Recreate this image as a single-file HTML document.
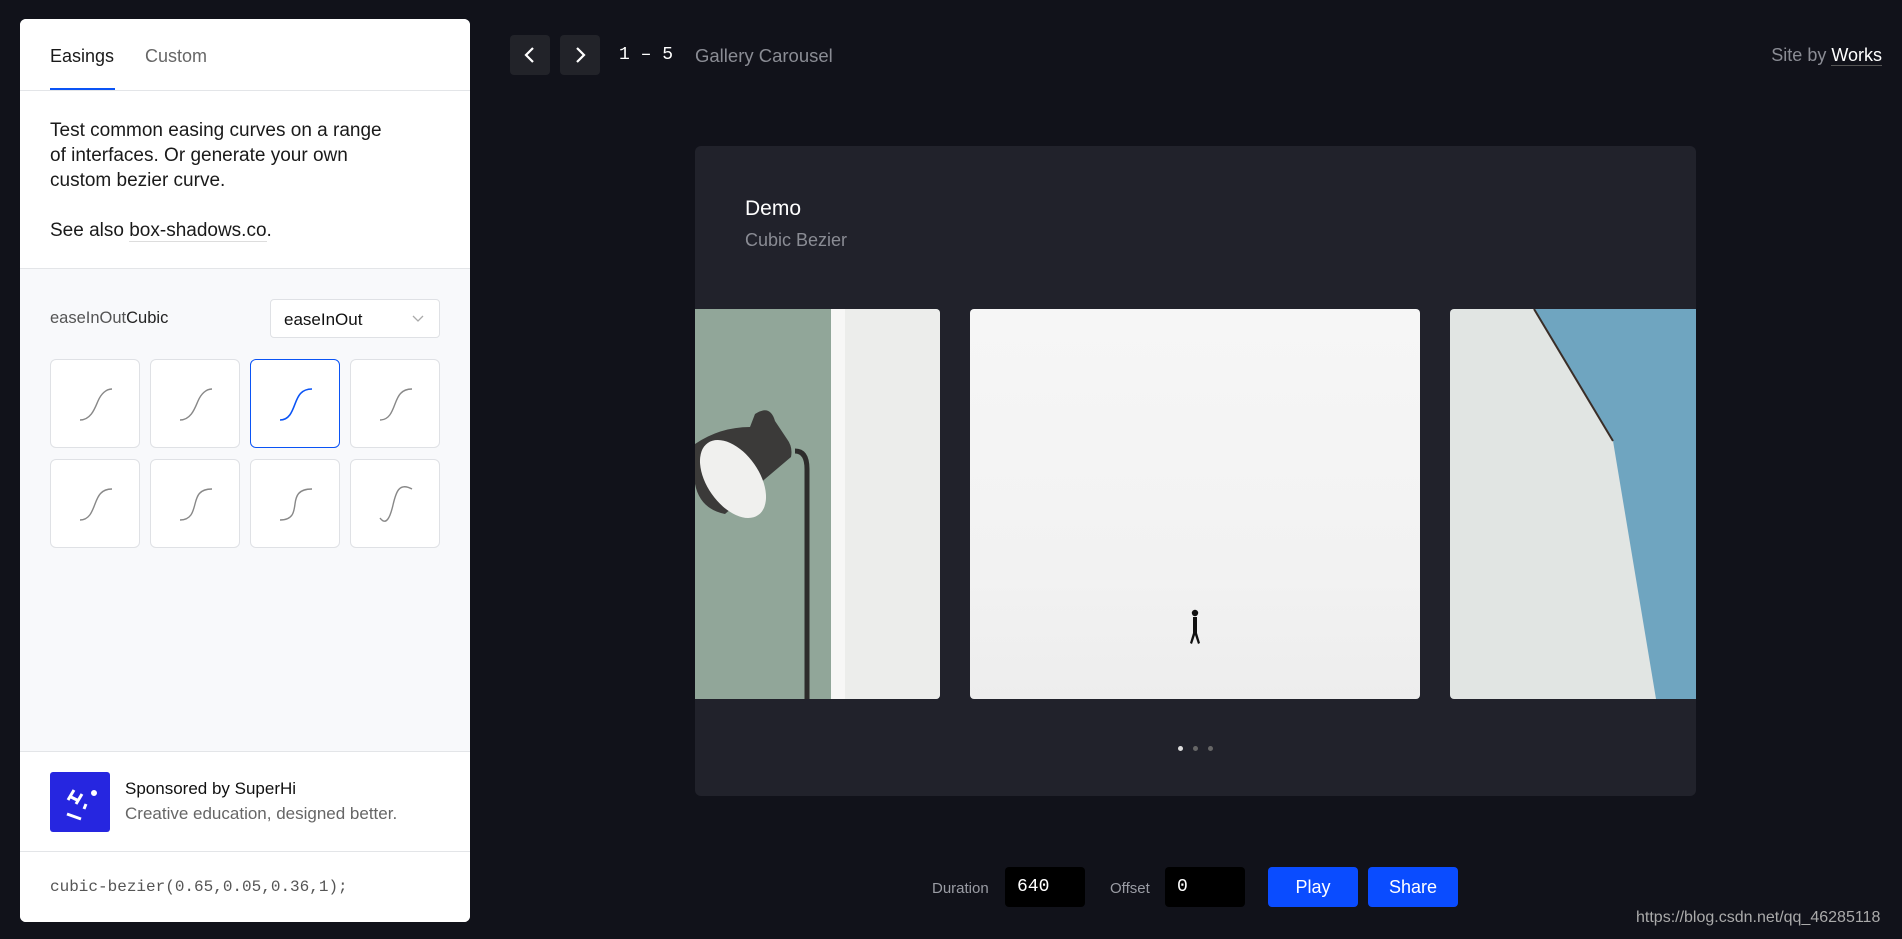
<!DOCTYPE html>
<html><head><meta charset="utf-8"><style>
*{box-sizing:border-box;margin:0;padding:0}
body{width:1902px;height:939px;background:#11121a;font-family:"Liberation Sans",sans-serif;position:relative;overflow:hidden}
.abs{position:absolute}
.panel{left:20px;top:19px;width:450px;height:903px;background:#f8f9fb;border-radius:6px;overflow:hidden}
.white{background:#fff}
.card{position:absolute;width:90px;height:89px;background:#fff;border:1px solid #dfe1e5;border-radius:6px}
.card svg{position:absolute;left:0;top:0}
.btn{background:#222329;border-radius:4px;width:40px;height:40px}
</style></head><body>
<div class="abs panel">
  <div class="abs white" style="left:0;top:0;width:450px;height:249px"></div>
  <div class="abs" style="left:30px;top:27px;font-size:18px;color:#1a1a1a">Easings</div>
  <div class="abs" style="left:125px;top:27px;font-size:18px;color:#666">Custom</div>
  <div class="abs" style="left:30px;top:69px;width:65px;height:2px;background:#0a53f5"></div>
  <div class="abs" style="left:0;top:71px;width:450px;height:1px;background:#e3e5e8"></div>
  <div class="abs" style="left:30px;top:99px;font-size:19px;line-height:25px;color:#1a1a1a;width:420px">Test common easing curves on a range<br>of interfaces. Or generate your own<br>custom bezier curve.<br><br>See also <span style="border-bottom:1px solid #ddd">box-shadows.co</span>.</div>
  <div class="abs" style="left:0;top:249px;width:450px;height:1px;background:#e3e5e8"></div>
  <div class="abs" style="left:30px;top:290px;font-size:16.5px;color:#555">easeInOut<span style="color:#222">Cubic</span></div>
  <div class="abs white" style="left:250px;top:280px;width:170px;height:39px;border:1px solid #dfe1e5;border-radius:4px"><span class="abs" style="left:13px;top:10px;font-size:17px;color:#111">easeInOut</span><svg class="abs" style="left:140px;top:14px" width="14" height="10"><path d="M2 2l5 5 5-5" stroke="#aaa" stroke-width="1.3" fill="none"/></svg></div>
  <div class="card" style="left:30px;top:340px"><svg width="90" height="89"><path d="M29 60 C40 60 44 48 47 41 S55 29 61 29" stroke="#888" stroke-width="1.4" fill="none"/></svg></div>
  <div class="card" style="left:130px;top:340px"><svg width="90" height="89"><path d="M29 60 C40 60 44 48 47 41 S55 29 61 29" stroke="#888" stroke-width="1.4" fill="none"/></svg></div>
  <div class="card" style="left:230px;top:340px;border-color:#0a53f5"><svg width="90" height="89"><path d="M29 60 C38 60 41 52 44 44 S50 29 61 29" stroke="#0a53f5" stroke-width="1.6" fill="none"/></svg></div>
  <div class="card" style="left:330px;top:340px"><svg width="90" height="89"><path d="M29 60 C38 60 41 52 44 44 S50 29 61 29" stroke="#888" stroke-width="1.4" fill="none"/></svg></div>
  <div class="card" style="left:30px;top:440px"><svg width="90" height="89"><path d="M29 60 C38 60 41 52 44 44 S50 29 61 29" stroke="#888" stroke-width="1.4" fill="none"/></svg></div>
  <div class="card" style="left:130px;top:440px"><svg width="90" height="89"><path d="M29 60 C40 60 42 52 44 44 S48 29 61 29" stroke="#888" stroke-width="1.4" fill="none"/></svg></div>
  <div class="card" style="left:230px;top:440px"><svg width="90" height="89"><path d="M29 60 C42 60 43 52 44 44 S47 29 61 29" stroke="#888" stroke-width="1.4" fill="none"/></svg></div>
  <div class="card" style="left:330px;top:440px"><svg width="90" height="89"><path d="M29 58 C35 66 39 58 42 45 S48 22 61 29" stroke="#888" stroke-width="1.4" fill="none"/></svg></div>
  <div class="abs white" style="left:0;top:732px;width:450px;height:171px;border-top:1px solid #e3e5e8"></div>
  <div class="abs" style="left:0;top:832px;width:450px;height:1px;background:#e3e5e8"></div>
  <div class="abs" style="left:30px;top:753px;width:60px;height:60px;background:#2626e0;border-radius:3px"><svg width="60" height="60"><g stroke="#fff" stroke-width="3" fill="none"><path d="M18 28l6-10M26 32l6-10M21 25l8 4M36 32l-2 5M17 42l14 5"/><circle cx="44" cy="21" r="1.5" fill="#fff"/></g></svg></div>
  <div class="abs" style="left:105px;top:760px;font-size:17px;color:#111">Sponsored by SuperHi</div>
  <div class="abs" style="left:105px;top:785px;font-size:17px;color:#666">Creative education, designed better.</div>
  <div class="abs" style="left:30px;top:859px;font-family:'Liberation Mono',monospace;font-size:16px;color:#555">cubic-bezier(0.65,0.05,0.36,1);</div>
</div>

<div class="abs btn" style="left:510px;top:35px"><svg width="40" height="40"><path d="M23 13l-7 7 7 7" stroke="#fff" stroke-width="2.2" fill="none"/></svg></div>
<div class="abs btn" style="left:560px;top:35px"><svg width="40" height="40"><path d="M17 13l7 7-7 7" stroke="#fff" stroke-width="2.2" fill="none"/></svg></div>
<div class="abs" style="left:619px;top:45px;font-family:'Liberation Mono',monospace;font-size:18px;color:#fff">1 – 5</div>
<div class="abs" style="left:695px;top:45px;font-size:18.5px;color:#8a8c94">Gallery Carousel</div>
<div class="abs" style="right:20px;top:45px;font-size:18px;color:#8a8c94">Site by <span style="color:#fff;border-bottom:1px solid #555">Works</span></div>

<div class="abs" style="left:695px;top:146px;width:1001px;height:650px;background:#21222b;border-radius:6px;overflow:hidden">
  <div class="abs" style="left:50px;top:51px;font-size:21px;color:#fff">Demo</div>
  <div class="abs" style="left:50px;top:84px;font-size:18px;color:#8a8c94">Cubic Bezier</div>
  <div class="abs" style="left:0;top:163px;width:245px;height:390px;background:#91a699;border-radius:0 4px 4px 0;overflow:hidden">
    <div class="abs" style="left:136px;top:0;width:109px;height:390px;background:#ecedeb"></div>
    <div class="abs" style="left:136px;top:0;width:14px;height:390px;background:#f7f7f6"></div>
    <svg class="abs" style="left:0;top:0" width="245" height="390"><path d="M100 142 Q112 142 112 160 L112 390" stroke="#2d2c2b" stroke-width="5" fill="none"/><path d="M60 105 Q75 95 80 112 L92 130 Q98 138 96 148 L70 170 L30 205 Q5 200 0 175 L0 135 Q25 118 55 118Z" fill="#3b3a39"/><ellipse cx="38" cy="170" rx="26" ry="44" transform="rotate(-35 38 170)" fill="#f0f0ee"/></svg>
  </div>
  <div class="abs" style="left:275px;top:163px;width:450px;height:390px;background:linear-gradient(#f6f6f6,#f2f2f2 68%,#ededed);border-radius:4px;overflow:hidden"><svg class="abs" style="left:215px;top:300px" width="20" height="42"><circle cx="10" cy="4" r="3.2" fill="#111"/><path d="M8 8 L12 8 L12 24 L15 34 L13 35 L10 26 L7 35 L5 34 L8 24Z" fill="#111"/></svg></div>
  <div class="abs" style="left:755px;top:163px;width:246px;height:390px;background:#e1e5e3;border-radius:4px 0 0 4px;overflow:hidden"><svg width="246" height="390"><path d="M84 0 L246 0 L246 390 L206 390 L163 132Z" fill="#6fa5c0"/><path d="M84 0 L163 132" stroke="#3a2e28" stroke-width="2"/></svg></div>
  <div class="abs" style="left:483px;top:600px;width:5px;height:5px;border-radius:50%;background:#ddd"></div>
  <div class="abs" style="left:498px;top:600px;width:5px;height:5px;border-radius:50%;background:#666"></div>
  <div class="abs" style="left:513px;top:600px;width:5px;height:5px;border-radius:50%;background:#666"></div>
</div>

<div class="abs" style="left:932px;top:880px;font-size:15px;color:#9a9ca4">Duration</div>
<div class="abs" style="left:1005px;top:867px;width:80px;height:40px;background:#000;border-radius:4px;color:#fff;font-family:'Liberation Mono',monospace;font-size:18px;padding:10px 12px">640</div>
<div class="abs" style="left:1110px;top:880px;font-size:15px;color:#9a9ca4">Offset</div>
<div class="abs" style="left:1165px;top:867px;width:80px;height:40px;background:#000;border-radius:4px;color:#fff;font-family:'Liberation Mono',monospace;font-size:18px;padding:10px 12px">0</div>
<div class="abs" style="left:1268px;top:867px;width:90px;height:40px;background:#0a4cff;border-radius:4px;color:#fff;font-size:18px;text-align:center;line-height:40px">Play</div>
<div class="abs" style="left:1368px;top:867px;width:90px;height:40px;background:#0a4cff;border-radius:4px;color:#fff;font-size:18px;text-align:center;line-height:40px">Share</div>
<div class="abs" style="left:1636px;top:909px;font-size:16px;color:#aaa">https://blog.csdn.net/qq_46285118</div>
</body></html>
